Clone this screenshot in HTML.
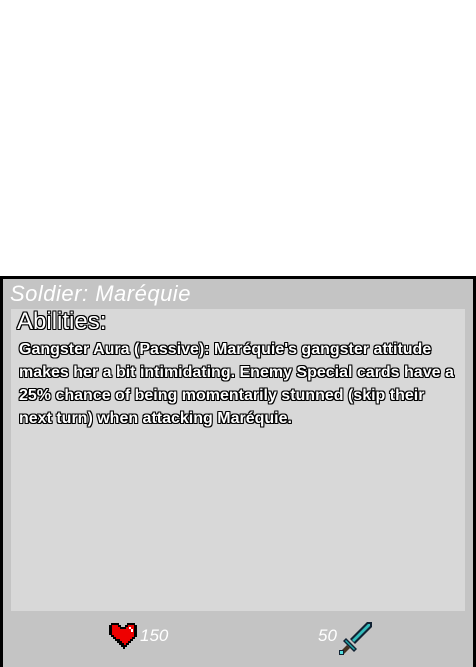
<!DOCTYPE html>
<html><head><style>
body{margin:0;width:476px;height:664px;background:#fff;position:relative;overflow:hidden;font-family:"Liberation Sans",sans-serif}
.card{position:absolute;left:0;top:276px;width:470px;height:388px;background:#c4c4c4;border:3px solid #000;border-bottom:none}
.out{color:#fff;text-shadow:-1px -1px 0 #000,1px -1px 0 #000,-1px 1px 0 #000,1px 1px 0 #000,0 1px 0 #000,0 -1px 0 #000,1px 0 0 #000,-1px 0 0 #000}
.title{position:absolute;left:7px;top:2px;font-style:italic;font-size:22px;color:#fff;letter-spacing:0.5px}
.inner{position:absolute;left:8px;top:30px;width:454px;height:302px;background:#d8d8d8}
.ab{position:absolute;left:6px;top:-1px;font-size:24px}
.txt{position:absolute;left:8px;top:29px;width:450px;font-size:16px;font-weight:bold;line-height:23px;letter-spacing:0px;white-space:nowrap}
.hp{position:absolute;left:137px;top:347px;font-style:italic;font-size:17px;color:#fff}
.atk{position:absolute;left:315px;top:347px;font-style:italic;font-size:17px;color:#fff}
</style></head><body>
<div class="card">
<div class="title">Soldier: Maréquie</div>
<div class="inner">
<div class="ab out">Abilities:</div>
<div class="txt out">Gangster Aura (Passive): Maréquie's gangster attitude<br>makes her a bit intimidating. Enemy Special cards have a<br>25% chance of being momentarily stunned (skip their<br>next turn) when attacking Maréquie.</div>
</div>
<svg style="position:absolute;left:105px;top:343px" width="30" height="28" viewBox="0 0 30 28">
<path d="M3 1h8v2h2v2h4V3h2V1h8v2h2v12h-2v2h-2v2h-2v2h-2v2h-2v2h-2v2h-2v-2h-2v-2h-2v-2H9v-2H7v-2H5v-2H3v-2H1V3h2z" fill="#000"/>
<path d="M4 3h6v2h2v2h6V5h2V3h6v12h-2v2h-2v2h-2v2h-2v2h-2v-2h-2v-2h-2v-2H8v-2H6v-2H4z" fill="#e00"/>
<rect x="21" y="5" width="2" height="2" fill="#fff"/><rect x="23" y="7" width="2" height="3" fill="#fff"/>
</svg>
<div class="hp">150</div>
<div class="atk">50</div>
<svg style="position:absolute;left:335px;top:343px" width="35" height="33" viewBox="0 0 35 33">
<path d="M29 0h5v5L17 22l-5-5z" fill="#123"/>
<path d="M30 2h2v2L16 20l-2-2z" fill="#3bb"/>
<path d="M5 19l3-3 11 11-3 3z" fill="#123"/>
<path d="M7 19l1-1 9 9-1 1z" fill="#2aa"/>
<path d="M9 23l3 3-6 6-3-3z" fill="#432"/>
<rect x="1" y="28" width="5" height="5" fill="#123"/><rect x="2" y="29" width="3" height="3" fill="#5dd"/>
</svg>
</div>
</body></html>
